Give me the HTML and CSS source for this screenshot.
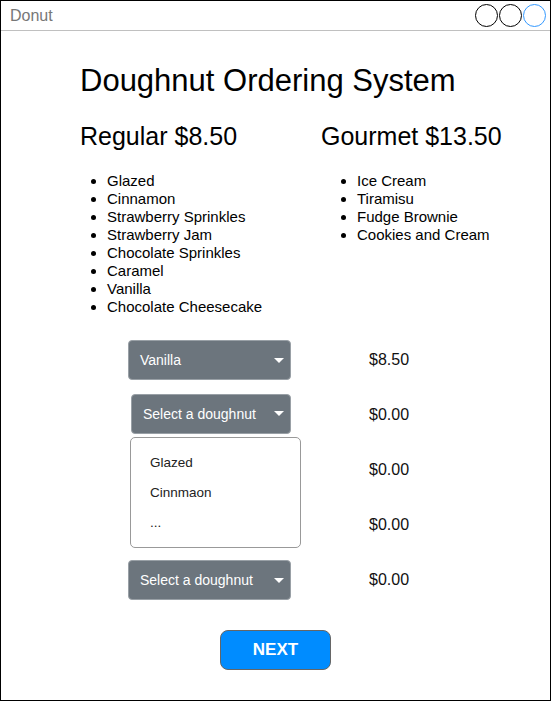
FILE: index.html
```html
<!DOCTYPE html>
<html lang="en">
<head>
<meta charset="utf-8">
<title>Donut</title>
<link rel="stylesheet" href="styles.css">
</head>
<body>
<div class="window">
  <div class="titlebar">
    <span class="app-name">Donut</span>
    <div class="controls">
      <span class="dot"></span>
      <span class="dot"></span>
      <span class="dot dot-blue"></span>
    </div>
  </div>
  <main class="content">
    <h1 class="title">Doughnut Ordering System</h1>
    <div class="menus">
      <section class="menu-col">
        <h2 class="menu-head">Regular $8.50</h2>
        <ul class="menu-list list-regular">
          <li>Glazed</li>
          <li>Cinnamon</li>
          <li>Strawberry Sprinkles</li>
          <li>Strawberry Jam</li>
          <li>Chocolate Sprinkles</li>
          <li>Caramel</li>
          <li>Vanilla</li>
          <li>Chocolate Cheesecake</li>
        </ul>
      </section>
      <section class="menu-col">
        <h2 class="menu-head">Gourmet $13.50</h2>
        <ul class="menu-list list-gourmet">
          <li>Ice Cream</li>
          <li>Tiramisu</li>
          <li>Fudge Brownie</li>
          <li>Cookies and Cream</li>
        </ul>
      </section>
    </div>
    <div class="orders">
      <div class="select"><span>Vanilla</span><span class="caret"></span></div>
      <div class="price">$8.50</div>

      <div class="select-wrap">
        <div class="select select-open"><span>Select a doughnut</span><span class="caret"></span></div>
        <div class="dropdown">
          <div class="dropdown-item">Glazed</div>
          <div class="dropdown-item">Cinnmaon</div>
          <div class="dropdown-item">...</div>
        </div>
      </div>
      <div class="price">$0.00</div>

      <div class="slot"></div>
      <div class="price">$0.00</div>

      <div class="slot"></div>
      <div class="price">$0.00</div>

      <div class="select"><span>Select a doughnut</span><span class="caret"></span></div>
      <div class="price">$0.00</div>
    </div>
    <div class="actions">
      <button class="next-btn" type="button">NEXT</button>
    </div>
  </main>
</div>
</body>
</html>
```

FILE: styles.css
```css
* {
  box-sizing: border-box;
}

html, body {
  margin: 0;
  padding: 0;
  background: #fff;
}

body {
  font-family: "Liberation Sans", Arial, sans-serif;
  color: #000;
}

.window {
  width: 551px;
  height: 701px;
  border: 1px solid #000;
  overflow: hidden;
}

.titlebar {
  height: 30px;
  border-bottom: 1px solid #c0c0c0;
  display: flex;
  align-items: center;
  justify-content: space-between;
  padding: 0 4px 0 9px;
}

.app-name {
  font-size: 16px;
  color: #777;
}

.controls {
  display: flex;
  gap: 1px;
}

.dot {
  width: 23px;
  height: 23px;
  border: 1.3px solid #000;
  border-radius: 50%;
}

.dot-blue {
  border-color: #3399ff;
}

.content {
  padding-left: 79px;
}

.title {
  margin: 33px 0 0;
  font-size: 31px;
  line-height: 34px;
  font-weight: normal;
}

.menus {
  display: grid;
  grid-template-columns: 241px auto;
  margin-top: 24px;
}

.menu-head {
  margin: 0;
  font-size: 25px;
  line-height: 29px;
  font-weight: normal;
}

.menu-list {
  margin: 21px 0 0;
  font-size: 15px;
  line-height: 18px;
}

.list-regular {
  padding-left: 27px;
}

.list-gourmet {
  padding-left: 36px;
}

.orders {
  display: grid;
  grid-template-columns: 163px auto;
  grid-auto-rows: 40px;
  row-gap: 15px;
  column-gap: 78px;
  align-items: center;
  margin: 24px 0 0 48px;
}

.select-wrap {
  position: relative;
  height: 40px;
  margin-top: -3px;
}

.slot {
  height: 40px;
}

.select {
  height: 40px;
  background: #6c757d;
  border: 1px solid #99a0a6;
  border-radius: 4px;
  color: #fff;
  font-size: 14px;
  display: flex;
  align-items: center;
  justify-content: space-between;
  padding: 0 6px 0 11px;
}

.select-open {
  margin-left: 3px;
  padding-left: 11px;
}

.caret {
  width: 0;
  height: 0;
  border-left: 5px solid transparent;
  border-right: 5px solid transparent;
  border-top: 5px solid #fff;
}

.dropdown {
  position: absolute;
  top: 43px;
  left: 2px;
  width: 171px;
  height: 111px;
  background: #fff;
  border: 1px solid #999;
  border-radius: 5px;
  padding-top: 10px;
  z-index: 2;
}

.dropdown-item {
  height: 30px;
  line-height: 30px;
  padding-left: 19px;
  font-size: 13.5px;
  color: #222;
}

.price {
  font-size: 16px;
  color: #111;
}

.actions {
  display: flex;
  justify-content: center;
  margin: 30px 0 0 -79px;
}

.next-btn {
  width: 111px;
  height: 40px;
  background: #008cff;
  border: 1px solid #666;
  border-radius: 8px;
  color: #fff;
  font-family: "Liberation Sans", Arial, sans-serif;
  font-size: 17px;
  font-weight: bold;
  padding: 0;
}
```
